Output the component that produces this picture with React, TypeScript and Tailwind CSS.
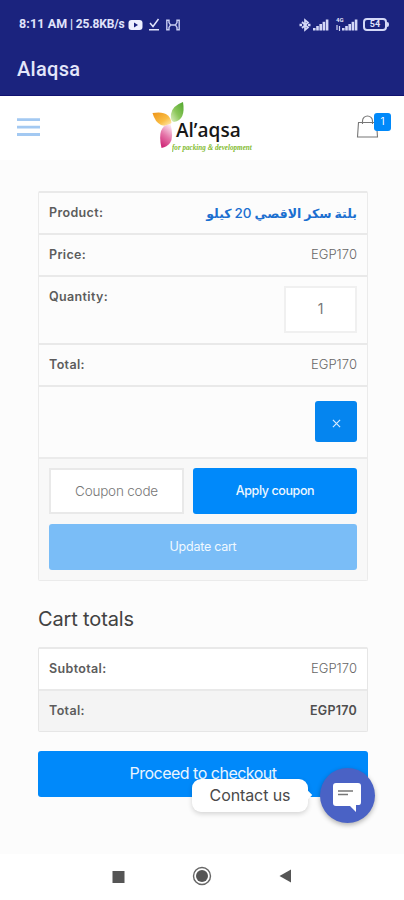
import React from 'react';

interface CartRowProps {
  label: string;
  className?: string;
  children: React.ReactNode;
}

function CartRow({ label, className = '', children }: CartRowProps) {
  return (
    <div className={`flex justify-between border-t-2 border-[#e9e9e9] px-[10px] text-[13px] leading-[40px] ${className}`}>
      <span className="font-semibold text-[12.5px] tracking-[0.35px] text-[#5c5c5c]">{label}</span>
      {children}
    </div>
  );
}

function Price({ bold = false }: { bold?: boolean }) {
  return (
    <span className={bold ? 'font-semibold text-[12.5px] tracking-[0.25px] text-[#4e4e4e]' : '-mt-px font-light tracking-[0.05px] text-[#666]'}>
      EGP170
    </span>
  );
}

function SignalBars() {
  return (
    <svg width="16" height="12" viewBox="0 0 16 12" fill="#d4d8f7">
      <rect x="0" y="9" width="2.6" height="2.5" />
      <rect x="3.2" y="7" width="2.6" height="4.5" />
      <rect x="6.4" y="5" width="2.6" height="6.5" />
      <rect x="9.6" y="2.8" width="2.6" height="8.7" />
      <rect x="12.8" y="0.5" width="2.6" height="11" />
    </svg>
  );
}

function StatusBar() {
  return (
    <div className="flex h-[49px] items-center pl-[19px] pr-[15px] font-['Roboto'] text-[12px] font-bold text-[#e0e3fb]">
      <span className="w-[108px] whitespace-nowrap tracking-[-0.15px]">
        <span className="text-[12.5px] tracking-[0.1px]">8:11 AM</span> | <span className="text-[12px]">25.8KB/s</span>
      </span>
      <svg className="ml-[1px]" width="15" height="12" viewBox="0 0 15 12">
        <rect x="0.5" y="1" width="14" height="10" rx="3" fill="#eef0ff" />
        <path d="M6 3.5v5l4-2.5z" fill="#1b237e" />
      </svg>
      <svg className="ml-[5px]" width="12" height="13" viewBox="0 0 12 13" fill="none" stroke="#e0e3fb" strokeWidth="1.5">
        <path d="M2 5l3 3.5L10.5 1M1 11.8h10" />
      </svg>
      <svg className="ml-[5px]" width="16" height="12" viewBox="0 0 16 12" fill="none" stroke="#c9cdf2" strokeWidth="1.4">
        <path d="M4 3.5V1.200H1.800v9.600H4V8.500L5.500 6zM12 3.500V1.200h2.200v9.600H12V8.500L10.500 6zM5.500 6h5" />
      </svg>
      <div className="ml-auto flex items-center">
        <svg width="12" height="14" viewBox="0 0 12 14" fill="none" stroke="#d4d8f7" strokeWidth="1.7">
          <path d="M3 4l6 5.5L6 12V2l3 2.5L3 10" />
          <path d="M0.5 7H3M9 7h2.5" strokeWidth="2.4" />
        </svg>
        <div className="ml-[2px]"><SignalBars /></div>
        <div className="relative ml-[13px]">
          <SignalBars />
          <span className="absolute -left-[6px] -top-[2px] text-[6px] leading-[6px]">4G</span>
          <svg className="absolute -left-[6px] top-[6px]" width="5" height="6" viewBox="0 0 5 6" stroke="#d4d8f7" strokeWidth="1.2">
            <path d="M1 0v5M3.5 1v5" />
          </svg>
        </div>
        <div className="ml-[5px] flex h-[13px] w-[24px] items-center justify-center rounded-[4px] border-2 border-[#d4d8f7] text-[9px] leading-none">
          54
        </div>
        <div className="h-[5px] w-[2px] rounded-r bg-[#d4d8f7]" />
      </div>
    </div>
  );
}

function Logo() {
  return (
    <div className="relative h-[54px] w-[104px]">
      <svg className="absolute left-0 top-0" width="36" height="50" viewBox="0 0 36 50">
        <defs>
          <linearGradient id="green" x1="1" y1="0" x2="0" y2="1">
            <stop offset="0" stopColor="#51a62e" />
            <stop offset="0.55" stopColor="#8cc75b" />
            <stop offset="1" stopColor="#e2f1c7" />
          </linearGradient>
          <linearGradient id="orange" x1="0" y1="0" x2="1" y2="1">
            <stop offset="0" stopColor="#ee9418" />
            <stop offset="0.6" stopColor="#f9bd45" />
            <stop offset="1" stopColor="#fff0bb" />
          </linearGradient>
          <linearGradient id="pink" x1="0.7" y1="0" x2="0.3" y2="1">
            <stop offset="0" stopColor="#fae5ef" />
            <stop offset="0.5" stopColor="#e576a9" />
            <stop offset="1" stopColor="#ce2476" />
          </linearGradient>
        </defs>
        <path d="M31 1Q34 19 22 21Q18 20 19 13Q20 5 31 1Z" fill="url(#green)" />
        <path d="M0.5 12Q18 9 19.5 22Q15 26 9 24Q3 21 0.5 12Z" fill="url(#orange)" />
        <path d="M18.5 23Q22 36 18 42Q15 46 9.5 47Q7 36 9 30Q11 24 18.5 23Z" fill="url(#pink)" />
      </svg>
      <span className="absolute left-[24px] top-[20px] whitespace-nowrap font-['Open_Sans'] text-[19px] font-semibold leading-[19px] text-[#171717]">
        Al’aqsa
      </span>
      <span className="absolute left-[20px] top-[43px] origin-left scale-x-[0.95] whitespace-nowrap font-['Liberation_Serif'] text-[7.5px] font-bold italic leading-[7px] text-[#82bb2f]">
        for packing &amp; development
      </span>
    </div>
  );
}

function SiteHeader() {
  return (
    <div className="flex h-[64px] items-start bg-white pl-[17px] pr-[13px]">
      <svg className="mt-[22px]" width="23" height="18" viewBox="0 0 23 18" stroke="#a3c9f2" strokeWidth="2.8">
        <path d="M0 1.7h23M0 9.200h23M0 16.500h23" />
      </svg>
      <div className="ml-[112px] mt-[5px]"><Logo /></div>
      <div className="relative ml-auto mt-[17px] h-[26px] w-[35px]">
        <svg width="24" height="26" viewBox="0 0 24 26" fill="none" stroke="#777" strokeWidth="1.1">
          <path d="M2.5 9.5h18l1 14.5h-20zM6.5 11V8a5 5 0 0 1 10 0v3" />
        </svg>
        <span className="absolute right-0 top-0 h-[18px] w-[17px] rounded-[3px] bg-[#0089fa] text-center text-[10px] leading-[17px] text-white">
          1
        </span>
      </div>
    </div>
  );
}

export default function App() {
  return (
    <div className="relative flex h-[900px] w-[404px] flex-col overflow-hidden bg-[#fcfcfc] font-['Inter',sans-serif]">
      <header className="h-[96px] border-b border-[#10116f] bg-[#1b237e]">
        <StatusBar />
        <h1 className="pl-[17px] font-['Roboto'] text-[20px] font-medium leading-[40px] tracking-[0.3px] text-[#e3e6fa]">Alaqsa</h1>
      </header>
      <SiteHeader />

      <main className="flex-1 pl-[38px] pr-[36px] pt-[31px]">
        <section className="h-[390px] rounded-[2px] border-x border-b border-[#ebebeb]">
          <CartRow label="Product:" className="h-[42px] border-[#e0e0e0]">
            <a dir="rtl" className="whitespace-nowrap font-['Inter','DejaVu_Sans',sans-serif] text-[12.5px] font-bold text-[#1b6fd0]">
              بلتة سكر الاقصي <span className="font-medium text-[13.5px]">20</span> كيلو
            </a>
          </CartRow>
          <CartRow label="Price:" className="h-[42px]"><Price /></CartRow>
          <CartRow label="Quantity:" className="h-[68px]">
            <span className="mt-[9px] h-[47px] w-[73px] border-2 border-[#f0f0f0] bg-white text-center text-[14px] leading-[42px] text-[#777]">
              1
            </span>
          </CartRow>
          <CartRow label="Total:" className="h-[42px]"><Price /></CartRow>
          <div className="flex h-[72px] justify-end border-t-2 border-[#e9e9e9] px-[10px] pt-[14px]">
            <button className="flex h-[41px] w-[42px] items-center justify-center rounded-[3px] bg-[#0585ef]">
              <svg className="mt-[3px]" width="9" height="9" viewBox="0 0 10 10" stroke="#d8ebff" strokeWidth="1.3">
                <path d="M1 1l8 8M9 1L1 9" />
              </svg>
            </button>
          </div>
          <div className="h-[123px] border-t-2 border-[#ebebeb] bg-[#f8f8f8] px-[10px] pt-[9px]">
            <div className="flex justify-between">
              <div className="h-[46px] w-[135px] border-2 border-[#e9e9e9] bg-white text-center text-[13.5px] font-light leading-[42px] tracking-[-0.2px] text-[#777]">
                Coupon code
              </div>
              <button className="h-[46px] w-[164px] rounded-[3px] bg-[#0089fa] text-[12.5px] font-medium tracking-[-0.4px] text-[#eff7ff]">
                Apply coupon
              </button>
            </div>
            <button className="mt-[10px] h-[46px] w-full rounded-[3px] bg-[#7abdf7] text-[12.5px] tracking-[-0.25px] text-[#f1f9ff]">
              Update cart
            </button>
          </div>
        </section>

        <h2 className="mt-[22px] text-[20px] leading-[32px] tracking-[-0.15px] text-[#424242]">Cart totals</h2>
        <section className="mt-[12px] h-[85px] rounded-[2px] border-x border-b border-[#e6e6e6]">
          <CartRow label="Subtotal:" className="h-[42px] border-[#e0e0e0] bg-white"><Price /></CartRow>
          <CartRow label="Total:" className="h-[42px] bg-[#f4f4f4]"><Price bold /></CartRow>
        </section>

        <button className="mt-[19px] h-[46px] w-full rounded-[3px] bg-[#0089fa] pb-[2px] text-[16px] tracking-[-0.5px] text-[#eaf5ff]">
          Proceed to checkout
        </button>
      </main>

      {/* Floating chat launcher */}
      <div className="absolute left-[192px] top-[768px] flex items-center">
        <div className="relative h-[33px] w-[116px] rounded-[9px] bg-white text-center text-[16px] leading-[33px] tracking-[-0.1px] text-[#4a4a4a] shadow-[0_2px_5px_rgba(0,0,0,0.16)]">
          Contact us
          <span className="absolute -right-[3px] top-[13px] h-[6px] w-[6px] rotate-45 bg-white" />
        </div>
        <div className="ml-[12px] flex h-[55px] w-[55px] items-center justify-center rounded-full bg-[#4a62c5] shadow-[0_2px_5px_rgba(0,0,0,0.3)]">
          <svg className="-ml-[2px] mt-[2px]" width="30" height="30" viewBox="0 0 30 30">
            <path d="M4 1h22q3 0 3 3v16q0 3-2 3h-3v7l-6-6H4q-3 0-3-3V4q0-3 3-3z" fill="#fff" />
            <path d="M6 9h15M6 12.5h10" stroke="#777" strokeWidth="1.7" />
          </svg>
        </div>
      </div>

      <nav className="flex h-[46px] items-center bg-white pl-[112px]">
        <svg width="13" height="13" viewBox="0 0 13 13"><rect x="0.5" y="0" width="12" height="12" fill="#555" /></svg>
        <svg className="-mt-[2px] ml-[67px]" width="20" height="20" viewBox="0 0 20 20">
          <circle cx="10" cy="10" r="8.5" fill="none" stroke="#666" strokeWidth="1.4" />
          <circle cx="10" cy="10" r="6" fill="#555" />
        </svg>
        <svg className="-mt-[2px] ml-[67px]" width="13" height="14" viewBox="0 0 13 14"><path d="M12 0.5v13L0.5 7z" fill="#555" /></svg>
      </nav>
    </div>
  );
}
